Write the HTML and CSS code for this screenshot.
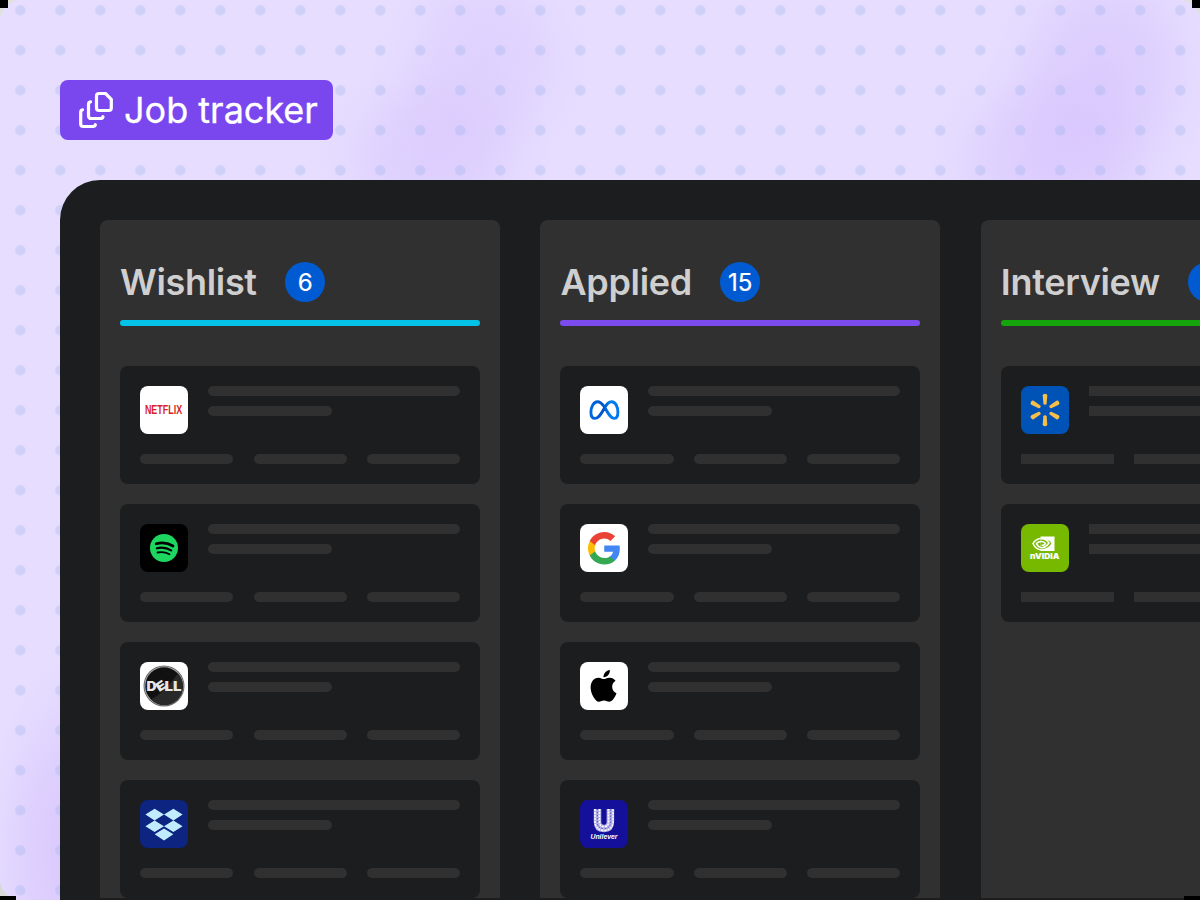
FILE: index.html
```
<!DOCTYPE html>
<html lang="en">
<head>
<meta charset="utf-8">
<title>Job tracker</title>
<link rel="stylesheet" href="styles.css">
</head>
<body>
<main class="scene">
  <i class="corner corner-tl"></i><i class="corner corner-tr"></i><i class="corner corner-bl"></i><i class="corner corner-br"></i>
  <div class="tag">
    <svg class="tag-icon" width="36" height="40" viewBox="0 0 36 40" fill="none" stroke="#fff" stroke-width="3.2" stroke-linecap="round" stroke-linejoin="round">
      <path d="M20 3.500H26.500L32.300 9.300V18a2.500 2.500 0 0 1-2.500 2.500H20A2.500 2.500 0 0 1 17.500 18V6a2.500 2.500 0 0 1 2.500-2.500Z"/>
      <path d="M11.500 11.800q-2 .2-2 2.500V26a2.500 2.500 0 0 0 2.500 2.500H21.500q2 0 2.500-1.800"/>
      <path d="M3.500 19.800Q1.700 20 1.700 22.500V34A2.500 2.500 0 0 0 4.200 36.500h9.800q2 0 2.400-1.800"/>
    </svg>
    <span>Job tracker</span>
  </div>
  <div class="board">
    <section class="column">
      <header class="head"><h2>Wishlist</h2><span class="badge">6</span></header>
      <div class="rule cyan"></div>
      <div class="cards">
        <article class="card"><div class="top">
          <svg class="logo" viewBox="0 0 48 48"><rect width="48" height="48" fill="#fff"/><text transform="translate(4.900 28) scale(.69 1)" class="netflix">NETFLIX</text></svg>
          <div class="lines"><i></i><i></i></div></div><div class="chips"><i></i><i></i><i></i></div></article>
        <article class="card"><div class="top">
          <svg class="logo" viewBox="0 0 48 48"><rect width="48" height="48"/><circle cx="24" cy="24" r="14" fill="#1ed760"/><g fill="none" stroke="#000" stroke-linecap="round"><path d="M16.200 19.800q8.800-2.500 16.800 2.200" stroke-width="2.700"/><path d="M16.900 24.300q7.500-2 14.300 2.100" stroke-width="2.200"/><path d="M17.500 28.500q6.500-1.500 12 1.800" stroke-width="1.800"/></g></svg>
          <div class="lines"><i></i><i></i></div></div><div class="chips"><i></i><i></i><i></i></div></article>
        <article class="card"><div class="top">
          <svg class="logo" viewBox="0 0 48 48"><rect width="48" height="48" fill="#fff"/><circle cx="24" cy="24" r="20.500" fill="#666"/><circle cx="24" cy="24" r="19.500" fill="#bbb"/><circle cx="24" cy="24" r="18.700" fill="#111"/><path d="M11 37.500Q24 31 38 11.500A18.700 18.700 0 0 1 11 37.500Z" fill="#292929"/><g class="dell"><text x="6.500" y="28.500" textLength="10" lengthAdjust="spacingAndGlyphs">D</text><text x="16" y="28.500" textLength="9.500" lengthAdjust="spacingAndGlyphs" transform="rotate(-33 20.700 24)">E</text><text x="24.500" y="28.500" textLength="17" lengthAdjust="spacingAndGlyphs">LL</text></g></svg>
          <div class="lines"><i></i><i></i></div></div><div class="chips"><i></i><i></i><i></i></div></article>
        <article class="card"><div class="top">
          <svg class="logo" viewBox="0 0 48 48"><rect width="48" height="48" fill="#0d2481"/><path d="M14.600 8.700 24 14.500 14.600 20.400 5.400 14.500ZM33.400 8.700 42.600 14.500 33.400 20.400 24 14.500ZM14.600 20.400 24 26.300 14.600 32.100 5.400 26.300ZM33.400 20.400 42.600 26.300 33.400 32.100 24 26.300ZM24 28.500 33.300 34.300 24 40.500 14.700 34.300Z" fill="#c0ecfd"/></svg>
          <div class="lines"><i></i><i></i></div></div><div class="chips"><i></i><i></i><i></i></div></article>
      </div>
    </section>
    <section class="column">
      <header class="head"><h2>Applied</h2><span class="badge">15</span></header>
      <div class="rule purple"></div>
      <div class="cards">
        <article class="card"><div class="top">
          <svg class="logo" viewBox="0 0 48 48"><defs><linearGradient id="meta"><stop offset="0" stop-color="#0069df"/><stop offset=".45" stop-color="#0052c8"/><stop offset=".7" stop-color="#007ff0"/><stop offset="1" stop-color="#0078ef"/></linearGradient></defs><rect width="48" height="48" fill="#fff"/><path d="M24.400 20.800C22.100 17.600 20.200 15.700 17.500 15.700c-3.900 0-6.600 5.300-6.600 10.500 0 4 1.500 6.200 4.200 6.200 3 0 5.100-2.900 9.300-10.200 2-3.900 4.200-6.500 7.200-6.500 4 0 6.300 5.200 6.300 10.500 0 4-1.500 6.200-3.900 6.200-2.800 0-4.800-2.900-9.600-11.600Z" fill="none" stroke="url(#meta)" stroke-width="2.900"/></svg>
          <div class="lines"><i></i><i></i></div></div><div class="chips"><i></i><i></i><i></i></div></article>
        <article class="card"><div class="top">
          <svg class="logo" viewBox="0 0 48 48"><rect width="48" height="48" fill="#fff"/><g transform="translate(8 8) scale(1.355)"><path fill="#4285f4" d="M23.490 12.270c0-.79-.07-1.540-.19-2.270H12v4.510h6.470c-.29 1.480-1.140 2.730-2.400 3.580v3h3.860c2.260-2.090 3.560-5.170 3.560-8.820z"/><path fill="#34a853" d="M12 24c3.240 0 5.950-1.080 7.930-2.910l-3.860-3c-1.080.72-2.450 1.160-4.070 1.160-3.130 0-5.780-2.110-6.730-4.960H1.290v3.090C3.260 21.300 7.310 24 12 24z"/><path fill="#fbbc05" d="M5.270 14.290A7.200 7.200 0 0 1 4.890 12c0-.8.140-1.570.380-2.290V6.620H1.290A11.900 11.900 0 0 0 0 12c0 1.940.47 3.770 1.290 5.380z"/><path fill="#ea4335" d="M12 4.750c1.770 0 3.350.61 4.600 1.800l3.420-3.420C17.950 1.190 15.240 0 12 0 7.310 0 3.260 2.700 1.290 6.620l3.980 3.090C6.220 6.860 8.870 4.750 12 4.750z"/></g></svg>
          <div class="lines"><i></i><i></i></div></div><div class="chips"><i></i><i></i><i></i></div></article>
        <article class="card"><div class="top">
          <svg class="logo" viewBox="0 0 48 48"><rect width="48" height="48" fill="#fff"/><path transform="translate(7.700 8) scale(1.320)" d="M12.152 6.896c-.948 0-2.415-1.078-3.960-1.040-2.040.027-3.910 1.183-4.961 3.014-2.117 3.675-.546 9.103 1.519 12.090 1.013 1.454 2.208 3.090 3.792 3.039 1.520-.065 2.090-.987 3.935-.987 1.831 0 2.350.987 3.960.948 1.637-.026 2.676-1.480 3.676-2.948 1.156-1.688 1.636-3.325 1.662-3.415-.039-.013-3.182-1.221-3.220-4.857-.026-3.040 2.480-4.494 2.597-4.559-1.429-2.090-3.623-2.324-4.390-2.376-2-.156-3.675 1.090-4.610 1.090zM15.530 3.830c.843-1.012 1.400-2.427 1.245-3.830-1.207.052-2.662.805-3.532 1.818-.780.896-1.454 2.338-1.273 3.714 1.338.104 2.715-.688 3.559-1.701"/></svg>
          <div class="lines"><i></i><i></i></div></div><div class="chips"><i></i><i></i><i></i></div></article>
        <article class="card"><div class="top">
          <svg class="logo" viewBox="0 0 48 48"><rect width="48" height="48" fill="#15109a"/><path d="M17.500 9v13q0 6.500 6.400 6.500t6.500-6.500V9" fill="none" stroke="#b5b2e6" stroke-width="7.500"/><path d="M15 9v14q1 7 9 7.500 8-.5 9-7.500V9M19.500 9v13q0 4.500 4.500 4.700 4.500-.2 4.500-4.700V9" fill="none" stroke="#fff" stroke-width="1.500" stroke-dasharray="2 1"/><path d="M17.300 9v13q0 6.300 6.700 6.600 6.700-.3 6.700-6.600V9" fill="none" stroke="#4742b2" stroke-width="1" stroke-dasharray="1.300 1.700"/><text x="10.500" y="38.700" class="unilever" textLength="27" lengthAdjust="spacingAndGlyphs">Unilever</text></svg>
          <div class="lines"><i></i><i></i></div></div><div class="chips"><i></i><i></i><i></i></div></article>
      </div>
    </section>
    <section class="column square">
      <header class="head"><h2>Interview</h2><span class="badge"></span></header>
      <div class="rule green"></div>
      <div class="cards">
        <article class="card"><div class="top">
          <svg class="logo" viewBox="0 0 48 48"><rect width="48" height="48" fill="#0053b6"/><defs><path id="ray" d="M21.700 9.500Q21.700 7.800 24 7.800t2.300 1.700L25.600 17.700Q25.400 18.700 24 18.700t-1.600-1Z"/></defs><g fill="#f6be4b"><use href="#ray"/><use href="#ray" transform="rotate(60 24 24)"/><use href="#ray" transform="rotate(120 24 24)"/><use href="#ray" transform="rotate(180 24 24)"/><use href="#ray" transform="rotate(240 24 24)"/><use href="#ray" transform="rotate(300 24 24)"/></g></svg>
          <div class="lines"><i></i><i></i></div></div><div class="chips"><i></i><i></i><i></i></div></article>
        <article class="card"><div class="top">
          <svg class="logo" viewBox="0 0 48 48"><rect width="48" height="48" fill="#77b900"/><path d="M19.500 12.500H33.500V27H19.500Z" fill="#fff"/><path d="M19.500 15Q26.500 14 30.500 19.500 26.500 25.800 19.500 25.800Z" fill="#77b900"/><g fill="none" stroke="#fff" stroke-width="1.500"><path d="M19.500 14.600Q14.500 15.200 12 19.500 14.500 25.300 20.500 26 26.500 25.500 30.500 21.500"/><path d="M19.500 14.900Q25 14.500 28 19 25 23.500 20.500 23.700 16.800 22.800 15.400 19.600 17.500 17.300 20.500 17.400 23.500 17.600 24.500 19.500 23 21.700 20.500 21.300"/></g><text x="9" y="35.300" class="nvidia" textLength="29.500" lengthAdjust="spacingAndGlyphs">nVIDIA</text></svg>
          <div class="lines"><i></i><i></i></div></div><div class="chips"><i></i><i></i><i></i></div></article>
      </div>
    </section>
  </div>
</main>
</body>
</html>
```
FILE: styles.css
```
* { box-sizing: border-box; }
body { margin: 0; font-family: Inter, "Liberation Sans", sans-serif; }
.scene {
  position: relative;
  width: 1200px;
  height: 900px;
  overflow: hidden;
  padding: 80px 0 0 60px;
  background:
    radial-gradient(circle, rgba(150, 175, 235, .29) 4.800px, transparent 5.600px) .3px -9.700px / 40px 40px,
    radial-gradient(ellipse 125px 150px at 1105px 70px, rgba(205, 180, 252, .42), rgba(205, 180, 252, .3) 40%, rgba(205, 180, 252, .08) 75%, transparent),
    radial-gradient(ellipse 135px 120px at 1050px 160px, rgba(205, 180, 252, .42), rgba(205, 180, 252, .3) 40%, rgba(205, 180, 252, .08) 75%, transparent),
    radial-gradient(ellipse 120px 135px at 485px 60px, rgba(205, 180, 252, .3), rgba(205, 180, 252, .22) 40%, rgba(205, 180, 252, .06) 75%, transparent),
    radial-gradient(ellipse 125px 110px at 430px 155px, rgba(205, 180, 252, .38), rgba(205, 180, 252, .27) 40%, rgba(205, 180, 252, .07) 75%, transparent),
    radial-gradient(ellipse 90px 200px at 70px 850px, rgba(205, 180, 252, .5), rgba(205, 180, 252, .36) 40%, rgba(205, 180, 252, .1) 80%, transparent),
    #e7deff;
}
.corner { position: absolute; width: 22px; height: 22px; overflow: hidden; }
.corner::before { content: ""; position: absolute; inset: 0; }
.corner::after { content: ""; position: absolute; width: 8px; height: 8px; background: #000; }
.corner-tl { left: 0; top: 0; }
.corner-tl::before { background: radial-gradient(circle at 100% 100%, transparent 22px, #e0e0dd 22.500px); }
.corner-tl::after { left: 0; top: 0; }
.corner-tr { right: 0; top: 0; }
.corner-tr::before { background: radial-gradient(circle at 0 100%, transparent 22px, #e0e0dd 22.500px); }
.corner-tr::after { right: 0; top: 0; }
.corner-bl { left: 0; bottom: 0; }
.corner-bl::before { background: radial-gradient(circle at 100% 0, transparent 22px, #d8d8d8 22.500px); }
.corner-bl::after { left: 0; bottom: 0; width: 16px; height: 4px; }
.corner-br { right: 0; bottom: 0; z-index: 1; }
.corner-br::after { right: 0; bottom: 0; width: 16px; height: 4px; }
.tag {
  display: flex;
  align-items: center;
  width: 273px;
  height: 60px;
  padding: 0 0 0 19px;
  border-radius: 8px;
  background: #7a47ef;
  color: #fff;
  font-size: 36px;
  font-weight: 400;
  -webkit-text-stroke: .3px #fff;
  white-space: nowrap;
}
.tag-icon { margin-right: 9px; }
.board {
  display: flex;
  gap: 40.400px;
  width: 1340px;
  height: 720px;
  margin-top: 40px;
  padding: 40px 40px 2px;
  border-radius: 40px 0 0 0;
  background: #1c1d1e;
}
.column {
  flex: 0 0 400px;
  padding: 42px 20px 0;
  border-radius: 8px 8px 0 0;
  background: #303030;
  overflow: hidden;
}
.head { display: flex; align-items: center; gap: 28.400px; height: 40px; }
.head h2 { margin: 0; color: #cfcfcf; font-size: 36px; font-weight: 600; line-height: 40px; letter-spacing: -.32px; }
.badge {
  width: 40px;
  height: 40px;
  border-radius: 50%;
  background: #005bd3;
  color: #fff;
  font-size: 24px;
  font-weight: 400;
  -webkit-text-stroke: .2px #fff;
  line-height: 41px;
  text-align: center;
}
.rule { height: 6px; margin: 18px 0 40px; border-radius: 3px; }
.cyan { background: #05c2e8; }
.purple { background: #7c4bee; }
.green { background: #15a40c; }
.cards { display: flex; flex-direction: column; gap: 20px; }
.card { height: 118px; padding: 20px; border-radius: 8px; background: #1c1d1e; }
.top { display: flex; gap: 20px; }
.logo { width: 48px; height: 48px; border-radius: 8px; }
.lines { flex: 1; display: flex; flex-direction: column; gap: 10px; }
.lines i, .chips i { height: 10px; border-radius: 5px; background: #303030; }
.lines i:last-child { width: 124px; }
.chips { display: grid; grid-template-columns: 93.400px 93.400px 93.400px; justify-content: space-between; margin-top: 20px; }
.chips i:nth-child(2) { margin: 0 -.400px 0 .400px; }
.square .lines i, .square .chips i { border-radius: 0; }
.netflix { font: 700 13px "Liberation Sans", sans-serif; fill: #d81f26; }
.dell { font: 900 12.500px Inter, sans-serif; fill: #e6e6e6; }
.unilever { font: italic 700 7.500px "Liberation Sans", sans-serif; fill: #fff; }
.nvidia { font: 900 8.200px Inter, sans-serif; fill: #fff; }
```
